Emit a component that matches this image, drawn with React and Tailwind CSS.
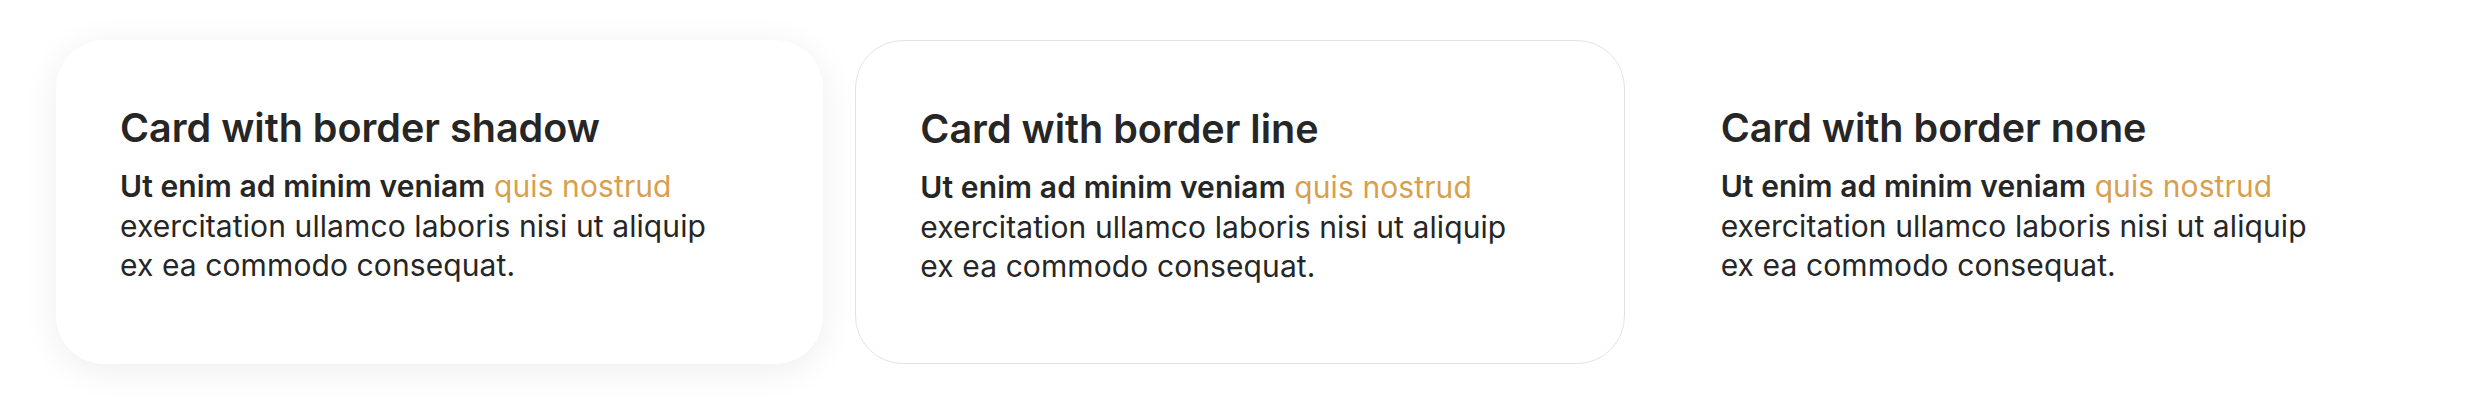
import React from 'react';

const cards = [
    { title: 'Card with border shadow', variant: 'shadow' },
    { title: 'Card with border line', variant: 'line' },
    { title: 'Card with border none', variant: 'none' },
];

const variantClass = {
    shadow: 'bg-white shadow-[0_6px_36px_rgba(0,0,0,0.07)]',
    line: 'bg-white border border-[#e3e3e3]',
    none: 'bg-white',
};

const Card = ({ title, variant }) => (
    <div className={`flex-1 rounded-[48px] pt-16 pb-20 px-16 ${variantClass[variant]}`}>
        <h3 className="text-[39.5px] leading-[48px] font-semibold text-[#262626]">{title}</h3>
        <p className="mt-[15px] max-w-[600px] text-[30px] leading-[39.5px] tracking-[0.1px] text-[#262626]">
            <span className="font-semibold">Ut enim ad minim veniam</span>{' '}
            <span className="text-[#d89f4f]">quis nostrud</span> exercitation ullamco laboris nisi ut aliquip ex ea commodo consequat.
        </p>
    </div>
);

export default function App() {
    return (
        <div className="w-[2480px] h-[404px] bg-white px-14 py-10 flex gap-8 font-['Inter',sans-serif]">
            {cards.map((c) => (
                <Card key={c.variant} {...c} />
            ))}
        </div>
    );
}
